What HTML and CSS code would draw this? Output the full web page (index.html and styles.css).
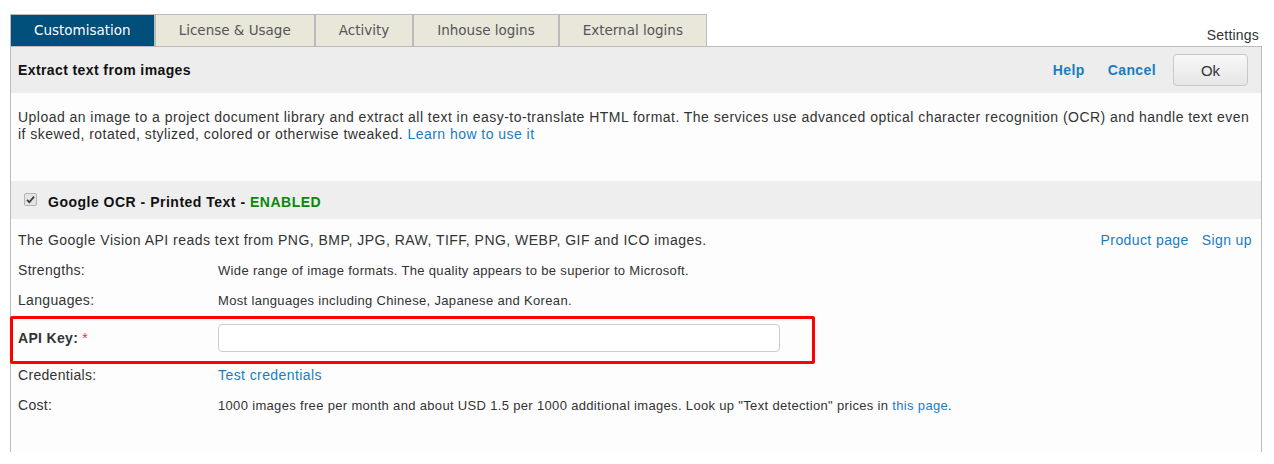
FILE: index.html
```html
<!DOCTYPE html>
<html lang="en">
<head>
  <meta charset="UTF-8">
  <title>Settings - Customisation</title>
  <link rel="stylesheet" href="styles.css">
</head>
<body>
  <div class="wrap">
    <!-- Tabs -->
    <div class="tabbar">
      <a class="tab active" href="#">Customisation</a>
      <a class="tab" href="#">License &amp; Usage</a>
      <a class="tab" href="#">Activity</a>
      <a class="tab" href="#">Inhouse logins</a>
      <a class="tab" href="#">External logins</a>
      <span class="settings">Settings</span>
    </div>

    <div class="panel">
      <!-- Panel header -->
      <div class="panel-head">
        <h1>Extract text from images</h1>
        <div class="actions">
          <a href="#" class="help">Help</a>
          <a href="#" class="cancel">Cancel</a>
          <button class="btn">Ok</button>
        </div>
      </div>

      <p class="intro">
        Upload an image to a project document library and extract all text in easy-to-translate HTML format. The services use advanced optical character recognition (OCR) and handle text even
        if skewed, rotated, stylized, colored or otherwise tweaked. <a href="#">Learn how to use it</a>
      </p>

      <!-- Google OCR service -->
      <div class="service-head">
        <span class="check">
          <svg width="9" height="9" viewBox="0 0 9 9"><path d="M1 4.8 L3.4 7.2 L8 1.6" fill="none" stroke="#3a3a3a" stroke-width="1.8"/></svg>
        </span>
        <span class="service-title">Google OCR - Printed Text - <span class="enabled">ENABLED</span></span>
      </div>

      <div class="service-body">
        <div class="summary">
          <span>The Google Vision API reads text from PNG, BMP, JPG, RAW, TIFF, PNG, WEBP, GIF and ICO images.</span>
          <span class="links"><a href="#">Product page</a><a href="#">Sign up</a></span>
        </div>
        <div class="row">
          <div class="label">Strengths:</div>
          <div class="value">Wide range of image formats. The quality appears to be superior to Microsoft.</div>
        </div>
        <div class="row">
          <div class="label">Languages:</div>
          <div class="value">Most languages including Chinese, Japanese and Korean.</div>
        </div>
        <div class="row key">
          <div class="label">API Key: <span class="req">*</span></div>
          <div class="value"><input type="text" class="api-input"></div>
          <div class="highlight"></div>
        </div>
        <div class="row">
          <div class="label">Credentials:</div>
          <div class="value"><a href="#" class="test-link">Test credentials</a></div>
        </div>
        <div class="row">
          <div class="label">Cost:</div>
          <div class="value">1000 images free per month and about USD 1.5 per 1000 additional images. Look up "Text detection" prices in <a href="#">this page</a>.</div>
        </div>
      </div>
    </div>
  </div>
</body>
</html>
```

FILE: styles.css
```css
/* General */
body {
  margin: 0;
  background: #fff;
  color: #333;
  font-family: "Liberation Sans", Arial, sans-serif;
  font-size: 14px;
  letter-spacing: 0.4px;
}

a {
  color: #1b7cc0;
  text-decoration: none;
}

.wrap {
  padding: 14px 12px 0 10px;
}

/* Tabs */
.tabbar {
  display: flex;
  align-items: flex-end;
  height: 32px;
}

.tab {
  box-sizing: border-box;
  height: 32px;
  line-height: 30px;
  padding: 0 23px;
  border: 1px solid #bbb;
  border-bottom: none;
  background: #e8e7da;
  color: #555;
  font-family: "DejaVu Sans", Verdana, sans-serif;
  font-size: 13.5px;
  letter-spacing: 0;
}

.tab.active {
  background: #004e7a;
  color: #fff;
}

.settings {
  margin-left: auto;
  margin-right: 3px;
  margin-bottom: 3px;
  line-height: 16px;
  letter-spacing: 0.2px;
}

/* Panel */
.panel {
  border: 1px solid #bbb;
  border-bottom: none;
  background: #fdfdfd;
}

.panel-head {
  display: flex;
  align-items: center;
  justify-content: space-between;
  height: 46px;
  padding: 0 13px 0 7px;
  background: #ededed;
}

.panel-head h1 {
  margin: 0;
  font-size: 14px;
  color: #111;
}

.actions {
  display: flex;
  align-items: center;
}

.actions a {
  font-weight: bold;
}

.actions .help {
  margin-right: 23px;
}

.actions .cancel {
  margin-right: 17px;
}

.btn {
  width: 75px;
  height: 32px;
  border: 1px solid #c8c8c8;
  border-radius: 4px;
  background: linear-gradient(#f8f8f8, #e6e6e6);
  color: #333;
  font-family: "Liberation Sans", Arial, sans-serif;
  font-size: 15px;
}

.intro {
  margin: 0;
  padding: 16px 8px 39px 7px;
  line-height: 16.5px;
  letter-spacing: 0.46px;
}

/* Service block */
.service-head {
  display: flex;
  align-items: center;
  height: 38px;
  box-sizing: border-box;
  padding: 3px 0 0 13px;
  background: #eee;
}

.check {
  display: flex;
  align-items: center;
  justify-content: center;
  box-sizing: border-box;
  width: 13px;
  height: 13px;
  margin: -4px 11px 0 0;
  border: 1px solid #b4b4b4;
  border-radius: 2px;
  background: #e4e4e4;
}

.service-title {
  font-weight: bold;
  color: #111;
  letter-spacing: 0.5px;
}

.enabled {
  color: #0a880a;
}

.service-body {
  padding: 6px 9px 32px 7px;
}

.summary {
  display: flex;
  align-items: center;
  justify-content: space-between;
  height: 30px;
}

.summary > span:first-child {
  letter-spacing: 0.48px;
}

.links a {
  margin-left: 13px;
}

.row {
  display: grid;
  grid-template-columns: 200px 1fr;
  align-items: center;
  height: 30px;
}

.row .label {
  letter-spacing: 0.32px;
}

.row .value {
  font-size: 13px;
  letter-spacing: 0.33px;
}

.row.key {
  position: relative;
  height: 45px;
}

.row.key .label {
  font-weight: bold;
}

.req {
  color: #e33;
  font-weight: normal;
}

.api-input {
  display: block;
  box-sizing: border-box;
  width: 562px;
  height: 28px;
  border: 1px solid #ccc;
  border-radius: 4px;
  background: #fff;
}

.test-link {
  font-size: 14px;
  letter-spacing: 0.42px;
}

/* Annotation box round the API key row */
.highlight {
  position: absolute;
  left: -8px;
  top: 1px;
  width: 805px;
  height: 48px;
  box-sizing: border-box;
  border: 3px solid #f00;
  border-radius: 2px;
  pointer-events: none;
}
```
